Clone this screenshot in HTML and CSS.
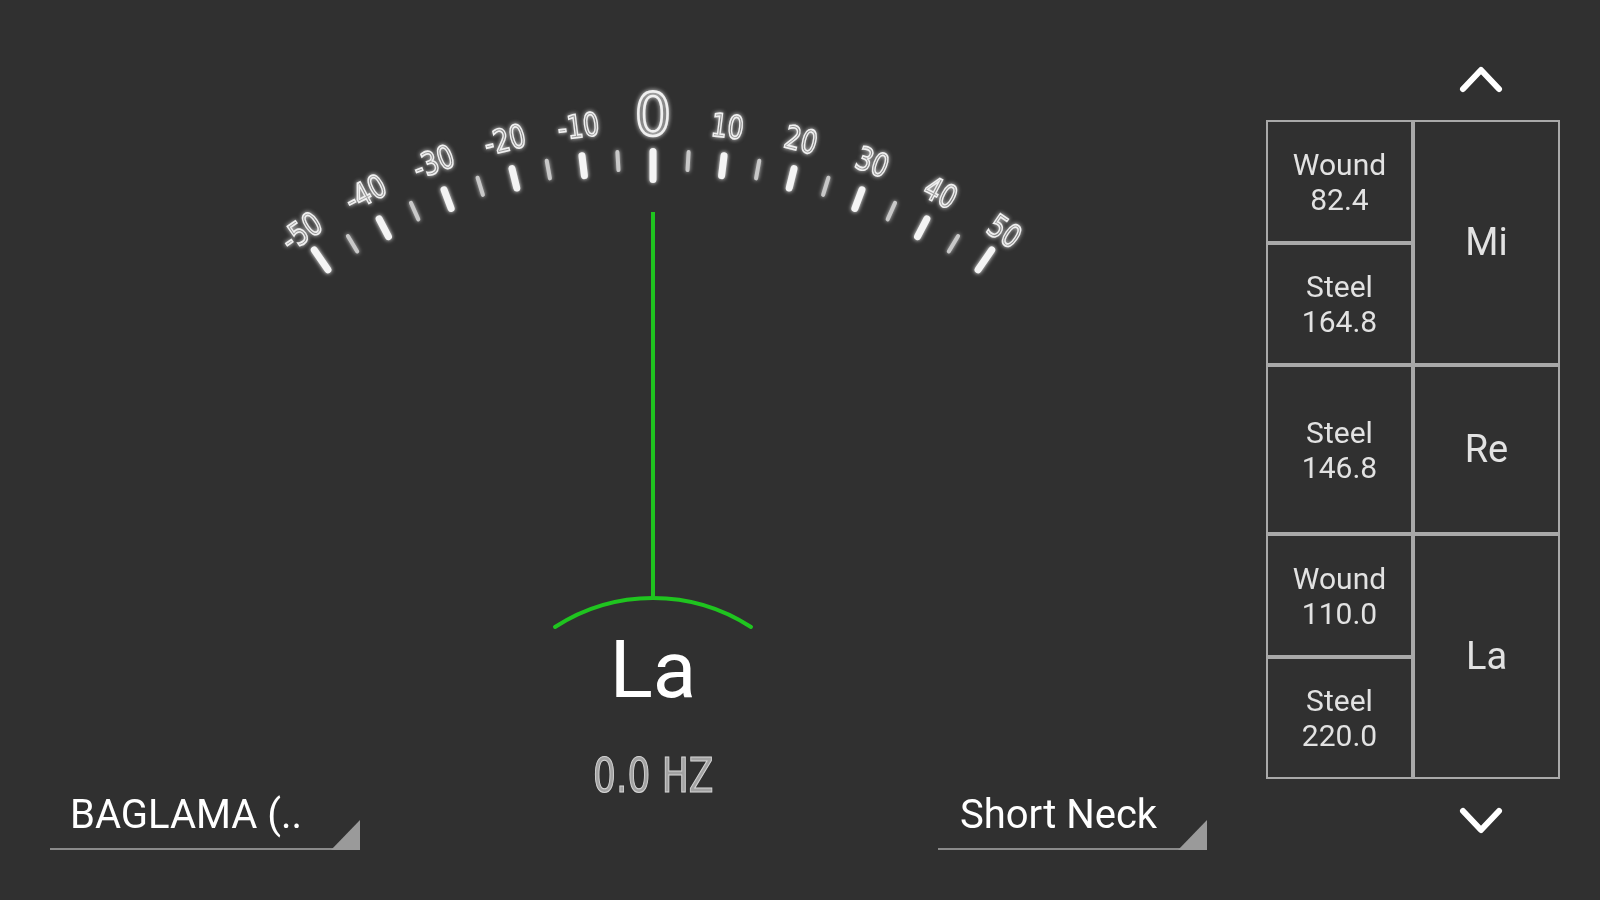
FILE: index.html
```html
<!DOCTYPE html>
<html>
<head>
<meta charset="utf-8">
<title>Tuner</title>
<link rel="stylesheet" href="styles.css">
</head>
<body>
<div class="app">
  <div class="main">
    <svg class="dial" width="1226" height="630" viewBox="40 0 1226 630">
      <defs>
        <filter id="glow" x="-50%" y="-50%" width="200%" height="200%">
          <feGaussianBlur in="SourceGraphic" stdDeviation="2" result="b"/>
          <feMerge><feMergeNode in="b"/><feMergeNode in="SourceGraphic"/></feMerge>
        </filter>
      </defs>
      <g class="ticks" filter="url(#glow)">
        <line class="t-end" transform="rotate(-34.6 653 741)" x1="653" y1="144.5" x2="653" y2="168.5"/>
        <line class="t-minor" transform="rotate(-31.14 653 741)" x1="653" y1="151" x2="653" y2="169"/>
        <line class="t-major" transform="rotate(-27.68 653 741)" x1="653" y1="151.5" x2="653" y2="171.5"/>
        <line class="t-minor" transform="rotate(-24.22 653 741)" x1="653" y1="151" x2="653" y2="169"/>
        <line class="t-major" transform="rotate(-20.76 653 741)" x1="653" y1="151.5" x2="653" y2="171.5"/>
        <line class="t-minor" transform="rotate(-17.3 653 741)" x1="653" y1="151" x2="653" y2="169"/>
        <line class="t-major" transform="rotate(-13.84 653 741)" x1="653" y1="151.5" x2="653" y2="171.5"/>
        <line class="t-minor" transform="rotate(-10.38 653 741)" x1="653" y1="151" x2="653" y2="169"/>
        <line class="t-major" transform="rotate(-6.92 653 741)" x1="653" y1="151.5" x2="653" y2="171.5"/>
        <line class="t-minor" transform="rotate(-3.46 653 741)" x1="653" y1="151" x2="653" y2="169"/>
        <line class="t-zero" x1="653" y1="151.5" x2="653" y2="179.5"/>
        <line class="t-minor" transform="rotate(3.46 653 741)" x1="653" y1="151" x2="653" y2="169"/>
        <line class="t-major" transform="rotate(6.92 653 741)" x1="653" y1="151.5" x2="653" y2="171.5"/>
        <line class="t-minor" transform="rotate(10.38 653 741)" x1="653" y1="151" x2="653" y2="169"/>
        <line class="t-major" transform="rotate(13.84 653 741)" x1="653" y1="151.5" x2="653" y2="171.5"/>
        <line class="t-minor" transform="rotate(17.3 653 741)" x1="653" y1="151" x2="653" y2="169"/>
        <line class="t-major" transform="rotate(20.76 653 741)" x1="653" y1="151.5" x2="653" y2="171.5"/>
        <line class="t-minor" transform="rotate(24.22 653 741)" x1="653" y1="151" x2="653" y2="169"/>
        <line class="t-major" transform="rotate(27.68 653 741)" x1="653" y1="151.5" x2="653" y2="171.5"/>
        <line class="t-minor" transform="rotate(31.14 653 741)" x1="653" y1="151" x2="653" y2="169"/>
        <line class="t-end" transform="rotate(34.6 653 741)" x1="653" y1="144.5" x2="653" y2="168.5"/>
      </g>
      <g class="labels" filter="url(#glow)">
        <text transform="rotate(-34.6 653 741) translate(653 133) scale(0.8 1)">-50</text>
        <text transform="rotate(-27.68 653 741) translate(653 133) scale(0.8 1)">-40</text>
        <text transform="rotate(-20.76 653 741) translate(653 133) scale(0.8 1)">-30</text>
        <text transform="rotate(-13.84 653 741) translate(653 133) scale(0.8 1)">-20</text>
        <text transform="rotate(-6.92 653 741) translate(653 133) scale(0.8 1)">-10</text>
        <text class="zero" transform="translate(653 135)">0</text>
        <text transform="rotate(6.92 653 741) translate(653 133) scale(0.8 1)">10</text>
        <text transform="rotate(13.84 653 741) translate(653 133) scale(0.8 1)">20</text>
        <text transform="rotate(20.76 653 741) translate(653 133) scale(0.8 1)">30</text>
        <text transform="rotate(27.68 653 741) translate(653 133) scale(0.8 1)">40</text>
        <text transform="rotate(34.6 653 741) translate(653 133) scale(0.8 1)">50</text>
      </g>
      <line class="needle" x1="653" y1="212" x2="653" y2="600"/>
      <path class="arc" d="M 555 627 A 180 180 0 0 1 751 627"/>
    </svg>
    <div class="note">La</div>
    <div class="bottom">
      <div class="spinner left">BAGLAMA (..</div>
      <div class="hz"><span>0.0 HZ</span></div>
      <div class="spinner right">Short Neck</div>
    </div>
  </div>
  <div class="panel">
    <svg class="chev" width="46" height="32" viewBox="0 0 46 32"><polyline points="5,27 23,8 41,27"/></svg>
    <div class="strings">
      <div class="cell c1 r1">Wound<br>82.4</div>
      <div class="cell c1 r2">Steel<br>164.8</div>
      <div class="cell c1 r3">Steel<br>146.8</div>
      <div class="cell c1 r4">Wound<br>110.0</div>
      <div class="cell c1 r5">Steel<br>220.0</div>
      <div class="cell c2 n-mi">Mi</div>
      <div class="cell c2 n-re">Re</div>
      <div class="cell c2 n-la">La</div>
    </div>
    <svg class="chev down" width="46" height="32" viewBox="0 0 46 32"><polyline points="5,6 23,25 41,6"/></svg>
  </div>
</div>
</body>
</html>
```

FILE: styles.css
```css
html, body {
  margin: 0;
  padding: 0;
  background: #303030;
}

.app {
  width: 1600px;
  height: 900px;
  display: flex;
  background: #303030;
  font-family: Roboto, "Noto Sans", sans-serif;
  overflow: hidden;
}

.main {
  width: 1266px;
  box-sizing: border-box;
  padding-left: 40px;
  display: flex;
  flex-direction: column;
}

.dial {
  display: block;
}

.ticks line {
  stroke-linecap: round;
}
.t-major, .t-end, .t-zero {
  stroke: #f4f4f4;
  stroke-width: 7;
}
.t-minor {
  stroke: #c8c8c8;
  stroke-width: 4;
}

.labels text {
  font-family: "DejaVu Sans", sans-serif;
  font-size: 32px;
  text-anchor: middle;
  fill: none;
  stroke: #f0f0f0;
  stroke-width: 1.7;
}
.labels text.zero {
  font-size: 58px;
  stroke-width: 2.6;
}

.needle {
  stroke: #1fc41f;
  stroke-width: 4;
}
.arc {
  fill: none;
  stroke: #1fc41f;
  stroke-width: 4;
  stroke-linecap: round;
}

.note {
  height: 80px;
  font-size: 80px;
  line-height: 80px;
  text-align: center;
  color: #ffffff;
}

.bottom {
  display: grid;
  grid-template-columns: 1fr auto 1fr;
  margin-top: 41px;
}

.hz {
  font-family: "DejaVu Sans", sans-serif;
  font-size: 48px;
  line-height: 49px;
  color: #a2a2a2;
  -webkit-text-stroke: 1.2px #d4d4d4;
}
.hz span {
  display: inline-block;
  transform: scaleX(0.75);
}

.spinner {
  position: relative;
  margin-top: 44px;
  box-sizing: border-box;
  font-size: 40px;
  line-height: 40px;
  color: #ffffff;
  padding-bottom: 13px;
  border-bottom: 2px solid #8a8a8a;
  white-space: nowrap;
  align-self: start;
}
.spinner::after {
  content: "";
  position: absolute;
  right: 0;
  bottom: -2px;
  width: 0;
  height: 0;
  border-left: 29px solid transparent;
  border-bottom: 30px solid #9a9a9a;
}
.spinner.left {
  justify-self: start;
  margin-left: 10px;
  width: 310px;
  padding-left: 20px;
}
.spinner.right {
  justify-self: end;
  margin-right: 59px;
  width: 269px;
  padding-left: 22px;
}

.panel {
  width: 294px;
  display: flex;
  flex-direction: column;
  padding-top: 62px;
}

.chev {
  display: block;
  align-self: flex-end;
  margin-right: 56px;
}
.chev polyline {
  fill: none;
  stroke: #ffffff;
  stroke-width: 6;
  stroke-linecap: round;
  stroke-linejoin: round;
}
.chev.down {
  margin-top: 26px;
}

.strings {
  margin-top: 26px;
  display: grid;
  grid-template-columns: 147px 147px;
  grid-template-rows: 123px 122px 169px 123px 122px;
}

.cell {
  box-sizing: border-box;
  border: 2px solid #a9a9a9;
  display: flex;
  align-items: center;
  justify-content: center;
  text-align: center;
  color: #e2e2e2;
  font-size: 30px;
  line-height: 35px;
}
.c1 { grid-column: 1; }
.c2 { grid-column: 2; font-size: 38px; }
.r1 { grid-row: 1; }
.r2 { grid-row: 2; }
.r3 { grid-row: 3; }
.r4 { grid-row: 4; }
.r5 { grid-row: 5; }
.n-mi { grid-row: 1 / span 2; }
.n-re { grid-row: 3; }
.n-la { grid-row: 4 / span 2; }
```
